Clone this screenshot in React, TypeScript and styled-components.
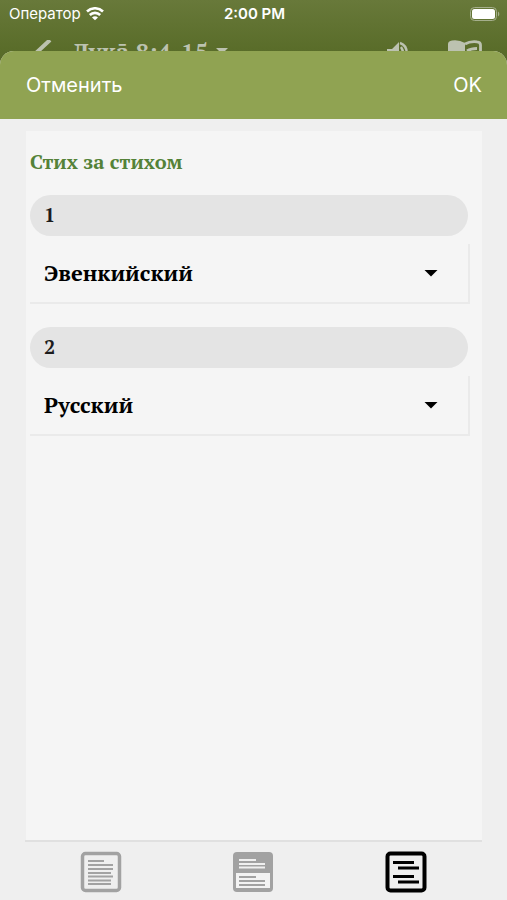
import React, { useState } from "react";
import styled, { createGlobalStyle } from "styled-components";

const serif = '"PT Serif", "Liberation Serif", serif';
const sans = 'Inter, "Liberation Sans", sans-serif';

const GlobalStyle = createGlobalStyle`
  *, *::before, *::after { box-sizing: border-box; }
  body { margin: 0; background: #efefef; }
  button, select { font: inherit; color: inherit; }
`;

const Page = styled.div`
  display: flex;
  flex-direction: column;
  min-height: 100vh;
  font-family: ${sans};
  background: #efefef;
`;

const Backdrop = styled.header`
  height: 66px;
  color: #ffffff;
  background: linear-gradient(#68793a, #5a6d2a 48px, #566828);
`;

const StatusBar = styled.div`
  display: grid;
  grid-template-columns: 1fr auto 1fr;
  align-items: center;
  height: 28px;
  padding: 0 7px 0 9px;
  font-size: 15px;
  line-height: 16px;
`;

const Carrier = styled.div`
  display: flex;
  align-items: center;
  gap: 5px;
`;

const Clock = styled.div`
  font-weight: 600;
`;

const Battery = styled.svg`
  justify-self: end;
`;

const ReaderBar = styled.div`
  display: flex;
  align-items: center;
  gap: 20px;
  height: 50px;
  padding: 0 25px 0 30px;
  color: #bcc2b0;
`;

const ReaderTitle = styled.div`
  display: flex;
  flex: 1;
  align-items: center;
  gap: 8px;
  padding-bottom: 4px;
  font-family: ${serif};
  font-size: 24px;
  font-weight: 700;
  line-height: 32px;
  white-space: nowrap;
`;

const ReaderTools = styled.div`
  display: flex;
  align-items: center;
  gap: 39px;
`;

const Sheet = styled.main`
  position: relative;
  display: flex;
  flex: 1;
  flex-direction: column;
  margin-top: -15px;
  border-radius: 14px 14px 0 0;
  overflow: hidden;
  background: #efefef;
`;

const ActionBar = styled.div`
  display: flex;
  align-items: center;
  justify-content: space-between;
  height: 68px;
  padding: 0 25px 0 26px;
  background: #90a352;
`;

const ActionButton = styled.button`
  padding: 0;
  border: 0;
  background: none;
  color: #ffffff;
  font-size: 20px;
  line-height: 24px;
  cursor: pointer;
`;

const Panel = styled.section`
  flex: 1;
  margin: 12px 25px 0 26px;
  padding: 16px 12px 0 4px;
  background: #f5f5f5;
`;

const Heading = styled.h1`
  margin: 0 0 18px;
  color: #548238;
  font-family: ${serif};
  font-size: 20px;
  font-weight: 700;
  line-height: 30px;
`;

const Choice = styled.div`
  margin-bottom: 23px;
  font-family: ${serif};
  font-weight: 700;
`;

const ChoiceLabel = styled.label`
  display: block;
  height: 41px;
  margin-right: 2px;
  padding: 0 14px;
  border-radius: 21px;
  background: #e4e4e4;
  color: #1c1c1c;
  font-size: 20px;
  line-height: 40px;
`;

const SelectFrame = styled.div`
  display: grid;
  align-items: center;
  height: 60px;
  margin-top: 8px;
  border-right: 2px solid #eaeaea;
  border-bottom: 2px solid #eaeaea;

  > * { grid-area: 1 / 1; }
`;

const Select = styled.select`
  width: 100%;
  height: 58px;
  padding: 0 56px 2px 14px;
  border: 0;
  appearance: none;
  background: transparent;
  color: #000000;
  font-size: 22px;
  cursor: pointer;
`;

const Caret = styled.svg`
  justify-self: end;
  margin-right: 30px;
  pointer-events: none;
`;

const ModeBar = styled.nav`
  display: grid;
  grid-template-columns: repeat(3, 1fr);
  height: 60px;
  margin: 0 25px;
  padding-top: 2px;
  border-top: 2px solid #e0e0e0;
`;

const ModeButton = styled.button<{ $active: boolean }>`
  display: flex;
  align-items: center;
  justify-content: center;
  padding: 0;
  border: 0;
  background: none;
  color: ${(p) => (p.$active ? "#000000" : "#a2a2a2")};
  cursor: pointer;
`;

const WifiIcon = () => (
  <svg width="18" height="14" viewBox="0 0 18 14" fill="none" stroke="#fff" aria-hidden="true">
    <path d="M1 4.500C5.500.2 12.500.2 17 4.500" strokeWidth="2.600" />
    <path d="M3.800 8C6.800 5.100 11.200 5.100 14.200 8" strokeWidth="2.600" />
    <path d="M9 13.300L6 10.500C7.800 8.900 10.200 8.900 12 10.500Z" fill="#fff" stroke="none" />
  </svg>
);

const BatteryIcon = () => (
  <Battery width="30" height="14" viewBox="0 0 30 14" aria-label="Battery">
    <rect x="0.500" y="0.500" width="26" height="13" rx="4" fill="none" stroke="#a5af8c" />
    <rect x="2" y="2" width="23" height="10" rx="2.500" fill="#fff" />
    <path d="M28 4.500C29.800 5.500 29.800 8.500 28 9.500Z" fill="#a5af8c" />
  </Battery>
);

const BackIcon = () => (
  <svg width="22" height="26" viewBox="0 0 22 26" aria-hidden="true">
    <path d="M20 0L6 13L20 26" fill="none" stroke="currentColor" strokeWidth="4" />
  </svg>
);

const SpeakerIcon = () => (
  <svg width="22" height="24" viewBox="0 0 22 24" aria-hidden="true">
    <path d="M0 8H5L12 1V23L5 16H0Z" fill="currentColor" />
    <path d="M14 6Q18 12 14 18M13 2C22 5 22 19 13 22" fill="none" stroke="currentColor" strokeWidth="2.400" />
  </svg>
);

const BookIcon = () => (
  <svg width="34" height="26" viewBox="0 0 34 26" aria-hidden="true">
    <path d="M0 4Q0 1 4 .5Q11-.5 17 3V25Q8 20 0 25Z" fill="currentColor" />
    <path
      d="M17 4Q22 1 29 1.800Q32.500 2 32.500 5V23Q25 20 17 24M19 11Q23 8.500 29 8.500M19 16Q23 13.500 29 13.500"
      fill="none"
      stroke="currentColor"
      strokeWidth="2.800"
    />
  </svg>
);

const SinglePaneIcon = () => (
  <svg width="42" height="42" viewBox="0 0 42 42" fill="none" stroke="currentColor" aria-hidden="true">
    <rect x="2.500" y="2.500" width="37" height="37" rx="3" strokeWidth="3.500" />
    <path d="M8 10H24M8 14H33M8 18H33M8 22H31M8 25.500H33M8 29.500H31M8 33H31" strokeWidth="2.200" />
  </svg>
);

const TwoPaneIcon = () => (
  <svg width="42" height="42" viewBox="0 0 42 42" fill="none" stroke="currentColor" aria-hidden="true">
    <rect x="1" y="1" width="40" height="40" rx="4" fill="currentColor" stroke="none" />
    <path d="M4 22H38V37H4Z" fill="#f3f3f3" stroke="none" />
    <path d="M7 9H24M7 13H33M7 16.500H33" stroke="#f0f0f0" strokeWidth="2.200" />
    <path d="M7 26H24M7 30H33M7 34H33" strokeWidth="2.200" />
  </svg>
);

const VerseByVerseIcon = () => (
  <svg width="42" height="42" viewBox="0 0 42 42" fill="none" stroke="currentColor" aria-hidden="true">
    <rect x="2.500" y="2.500" width="37" height="37" rx="3" strokeWidth="4" />
    <path d="M8 11.500H29M13 17H34M8 25.500H29M13 31H34" strokeWidth="3.200" />
  </svg>
);

const modes = [
  { id: "single", label: "Один перевод", Icon: SinglePaneIcon },
  { id: "two", label: "Два перевода", Icon: TwoPaneIcon },
  { id: "verse", label: "Стих за стихом", Icon: VerseByVerseIcon },
];

const languages = ["Эвенкийский", "Русский"];

function LanguageChoice({ number, initial }: { number: number; initial: string }) {
  const [language, setLanguage] = useState(initial);
  const id = `language-${number}`;
  return (
    <Choice>
      <ChoiceLabel htmlFor={id}>{number}</ChoiceLabel>
      <SelectFrame>
        <Select id={id} value={language} onChange={(e) => setLanguage(e.target.value)}>
          {languages.map((name) => (
            <option key={name}>{name}</option>
          ))}
        </Select>
        <Caret width="14" height="8" viewBox="0 0 14 8" aria-hidden="true">
          <path d="M.5 1H13.500L7 7.500Z" fill="#000" />
        </Caret>
      </SelectFrame>
    </Choice>
  );
}

export default function App() {
  const [mode, setMode] = useState("verse");
  return (
    <Page>
      <GlobalStyle />
      <Backdrop>
        <StatusBar>
          <Carrier>
            Оператор
            <WifiIcon />
          </Carrier>
          <Clock>2:00 PM</Clock>
          <BatteryIcon />
        </StatusBar>
        <ReaderBar>
          <BackIcon />
          <ReaderTitle>
            Лукā 8:4-15
            <svg width="12" height="6" viewBox="0 0 12 6" aria-hidden="true">
              <path d="M0 0H12L6 6Z" fill="currentColor" />
            </svg>
          </ReaderTitle>
          <ReaderTools>
            <SpeakerIcon />
            <BookIcon />
          </ReaderTools>
        </ReaderBar>
      </Backdrop>
      <Sheet>
        <ActionBar>
          <ActionButton type="button">Отменить</ActionButton>
          <ActionButton type="button">OK</ActionButton>
        </ActionBar>
        <Panel>
          <Heading>Стих за стихом</Heading>
          <LanguageChoice number={1} initial="Эвенкийский" />
          <LanguageChoice number={2} initial="Русский" />
        </Panel>
        <ModeBar>
          {modes.map(({ id, label, Icon }) => (
            <ModeButton
              key={id}
              type="button"
              aria-label={label}
              aria-pressed={mode === id}
              $active={mode === id}
              onClick={() => setMode(id)}
            >
              <Icon />
            </ModeButton>
          ))}
        </ModeBar>
      </Sheet>
    </Page>
  );
}
